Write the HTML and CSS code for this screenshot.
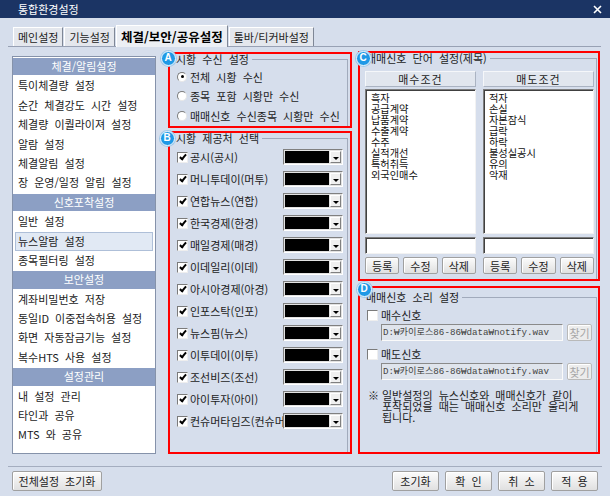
FILE: index.html
```html
<!DOCTYPE html>
<html lang="ko">
<head>
  <meta charset="UTF-8">
  <meta name="viewport" content="width=device-width, initial-scale=1.0">
  <title>통합환경설정</title>
  <link rel="stylesheet" href="styles.css">
</head>
<body>
  <div class="window">
    <div class="titlebar">
      <span class="title">통합환경설정</span>
      <svg class="close" width="9" height="9" viewBox="0 0 9 9"><path d="M1 1L8 8M8 1L1 8" stroke="#fff" stroke-width="1.6"/></svg>
    </div>

    <div class="tabs">
      <span class="tab">메인설정</span>
      <span class="tab">기능설정</span>
      <span class="tab active">체결/보안/공유설정</span>
      <span class="tab">툴바/티커바설정</span>
    </div>

    <div class="main">
      <div class="menu">
        <div class="menu-head">체결/알림설정</div>
        <div class="menu-item">특이체결량 설정</div>
        <div class="menu-item">순간 체결강도 시간 설정</div>
        <div class="menu-item">체결량 이퀄라이져 설정</div>
        <div class="menu-item">알람 설정</div>
        <div class="menu-item">체결알림 설정</div>
        <div class="menu-item">장 운영/일정 알림 설정</div>
        <div class="menu-head">신호포착설정</div>
        <div class="menu-item">일반 설정</div>
        <div class="menu-item sel">뉴스알람 설정</div>
        <div class="menu-item">종목필터링 설정</div>
        <div class="menu-head">보안설정</div>
        <div class="menu-item">계좌비밀번호 저장</div>
        <div class="menu-item">동일ID 이중접속허용 설정</div>
        <div class="menu-item">화면 자동잠금기능 설정</div>
        <div class="menu-item">복수HTS 사용 설정</div>
        <div class="menu-head">설정관리</div>
        <div class="menu-item">내 설정 관리</div>
        <div class="menu-item">타인과 공유</div>
        <div class="menu-item">MTS 와 공유</div>
      </div>

      <div class="col col-mid">
        <div class="mark mark-a">
          <span class="badge badge-a">A</span>
          <fieldset class="group">
            <legend>시황 수신 설정</legend>
            <div class="opts">
              <div class="opt"><span class="radio on"></span>전체 시황 수신</div>
              <div class="opt"><span class="radio"></span>종목 포함 시황만 수신</div>
              <div class="opt"><span class="radio"></span>매매신호 수신종목 시황만 수신</div>
            </div>
          </fieldset>
        </div>

        <div class="mark mark-b">
          <span class="badge badge-b">B</span>
          <fieldset class="group">
            <legend>시황 제공처 선택</legend>
            <div class="sources">
              <div class="src"><span class="chk on"></span><span class="src-name">공시(공시)</span><span class="combo"><span class="combo-fill"></span><span class="combo-btn"></span></span></div>
              <div class="src"><span class="chk on"></span><span class="src-name">머니투데이(머투)</span><span class="combo"><span class="combo-fill"></span><span class="combo-btn"></span></span></div>
              <div class="src"><span class="chk on"></span><span class="src-name">연합뉴스(연합)</span><span class="combo"><span class="combo-fill"></span><span class="combo-btn"></span></span></div>
              <div class="src"><span class="chk on"></span><span class="src-name">한국경제(한경)</span><span class="combo"><span class="combo-fill"></span><span class="combo-btn"></span></span></div>
              <div class="src"><span class="chk on"></span><span class="src-name">매일경제(매경)</span><span class="combo"><span class="combo-fill"></span><span class="combo-btn"></span></span></div>
              <div class="src"><span class="chk on"></span><span class="src-name">이데일리(이데)</span><span class="combo"><span class="combo-fill"></span><span class="combo-btn"></span></span></div>
              <div class="src"><span class="chk on"></span><span class="src-name">아시아경제(아경)</span><span class="combo"><span class="combo-fill"></span><span class="combo-btn"></span></span></div>
              <div class="src"><span class="chk on"></span><span class="src-name">인포스탁(인포)</span><span class="combo"><span class="combo-fill"></span><span class="combo-btn"></span></span></div>
              <div class="src"><span class="chk on"></span><span class="src-name">뉴스핌(뉴스)</span><span class="combo"><span class="combo-fill"></span><span class="combo-btn"></span></span></div>
              <div class="src"><span class="chk on"></span><span class="src-name">이투데이(이투)</span><span class="combo"><span class="combo-fill"></span><span class="combo-btn"></span></span></div>
              <div class="src"><span class="chk on"></span><span class="src-name">조선비즈(조선)</span><span class="combo"><span class="combo-fill"></span><span class="combo-btn"></span></span></div>
              <div class="src"><span class="chk on"></span><span class="src-name">아이투자(아이)</span><span class="combo"><span class="combo-fill"></span><span class="combo-btn"></span></span></div>
              <div class="src"><span class="chk on"></span><span class="src-name">컨슈머타임즈(컨슈머)</span><span class="combo"><span class="combo-fill"></span><span class="combo-btn"></span></span></div>
            </div>
          </fieldset>
        </div>
      </div>

      <div class="col col-right">
        <div class="mark mark-c">
          <span class="badge badge-c">C</span>
          <fieldset class="group group-c">
            <legend>매매신호 단어 설정(제목)</legend>
            <div class="cond">
              <div class="cond-col">
                <div class="cond-head">매수조건</div>
                <div class="cond-list">흑자<br>공급계약<br>납품계약<br>수출계약<br>수주<br>실적개선<br>특허취득<br>외국인매수</div>
                <div class="cond-input"></div>
                <div class="cond-btns">
                  <button class="btn">등록</button>
                  <button class="btn">수정</button>
                  <button class="btn">삭제</button>
                </div>
              </div>
              <div class="cond-col">
                <div class="cond-head">매도조건</div>
                <div class="cond-list">적자<br>손실<br>자본잠식<br>급락<br>하락<br>불성실공시<br>유의<br>악재</div>
                <div class="cond-input"></div>
                <div class="cond-btns">
                  <button class="btn">등록</button>
                  <button class="btn">수정</button>
                  <button class="btn">삭제</button>
                </div>
              </div>
            </div>
          </fieldset>
        </div>

        <div class="mark mark-d">
          <span class="badge badge-d">D</span>
          <fieldset class="group group-d">
            <legend>매매신호 소리 설정</legend>
            <div class="snd">
              <div class="snd-check"><span class="chk"></span>매수신호</div>
              <div class="snd-path">
                <span class="path-box">D:₩카이로스86-86₩data₩notify.wav</span>
                <button class="btn find-btn">찾기</button>
              </div>
            </div>
            <div class="snd snd-2">
              <div class="snd-check"><span class="chk"></span>매도신호</div>
              <div class="snd-path">
                <span class="path-box">D:₩카이로스86-86₩data₩notify.wav</span>
                <button class="btn find-btn">찾기</button>
              </div>
            </div>
            <div class="note">
              <span class="note-mark">※</span>
              <span>일반설정의 뉴스신호와 매매신호가 같이<br>포착되었을 때는 매매신호 소리만 울리게<br>됩니다.</span>
            </div>
          </fieldset>
        </div>
      </div>
    </div>

    <div class="footer">
      <button class="btn btn-reset">전체설정 초기화</button>
      <div class="spacer"></div>
      <button class="btn btn-foot">초기화</button>
      <button class="btn btn-foot">확 인</button>
      <button class="btn btn-foot">취 소</button>
      <button class="btn btn-foot">적 용</button>
    </div>
  </div>
</body>
</html>
```

FILE: styles.css
```css
* {
  box-sizing: border-box;
}

body {
  margin: 0;
  font-family: "Noto Sans CJK KR", "Liberation Sans", sans-serif;
  font-size: 11px;
  color: #1c1c1c;
}

.window {
  width: 610px;
  height: 496px;
  background-color: #d6deec;
  display: flex;
  flex-direction: column;
  word-spacing: 3px;
  overflow: hidden;
}

/* title bar */
.titlebar {
  height: 18px;
  flex: none;
  background-color: #1b3464;
  color: #fff;
  display: flex;
  align-items: center;
  justify-content: space-between;
  padding: 0 8px 0 18px;
}

/* tabs */
.tabs {
  height: 29px;
  flex: none;
  margin: 0 9px 0 8px;
  padding-left: 5px;
  display: flex;
  align-items: flex-end;
  gap: 1px;
  border-bottom: 1px solid #98a1b4;
}

.tab {
  height: 19px;
  padding: 0 4px;
  line-height: 18px;
  background-color: #e4e7ed;
  border: 1px solid;
  border-color: #fff #7f8796 transparent #fff;
  border-bottom: none;
  word-spacing: 0;
}

.tab.active {
  height: 22px;
  margin-bottom: -1px;
  background-color: #eceff4;
  font-weight: bold;
  font-size: 12.5px;
  line-height: 21px;
  color: #000;
}

/* main area */
.main {
  height: 407px;
  flex: none;
  display: flex;
  padding: 4px 10px 0 12px;
}

.menu {
  width: 144px;
  margin: 5px 12px 0 0;
  background-color: #fff;
  border: 1px solid #8592aa;
}

.menu-head {
  height: 17.4px;
  margin: 1px 0;
  line-height: 17px;
  text-align: center;
  background-color: #8c9fc4;
  color: #fff;
}

.menu-item {
  height: 19.4px;
  line-height: 19px;
  margin: 0 2px;
  padding-left: 3px;
  white-space: nowrap;
}

.menu-item.sel {
  background-color: #e1e9f4;
  border: 1px solid #aebfd8;
  line-height: 17px;
  padding-left: 2px;
}

.col {
  display: flex;
  flex-direction: column;
}

.col-mid {
  width: 184px;
  margin-right: 6px;
  padding-top: 1px;
  gap: 3px;
}

.col-right {
  width: 242px;
  gap: 5px;
}

/* red annotation boxes */
.mark {
  position: relative;
  border: 2px solid #ff0000;
  display: flex;
  flex-direction: column;
}

.mark-a {
  height: 76px;
}

.mark-c {
  height: 230px;
}

.mark-b,
.mark-d {
  flex: 1;
}

.badge {
  position: absolute;
  z-index: 2;
  width: 15px;
  height: 15px;
  border-radius: 50%;
  background-color: #1f99e6;
  border: 1.5px solid #eef7fd;
  box-shadow: 0 0 0 1px #9fc9ea;
  color: #fff;
  font: bold 10px/12px "Liberation Sans", sans-serif;
  text-align: center;
}

.badge-a { left: -9.5px; top: -3.5px; }
.badge-b { left: -10.5px; top: -2.5px; }
.badge-c { left: -4.5px; top: -2.5px; }
.badge-d { left: -3.5px; top: -6.5px; }

/* group boxes */
.group {
  flex: 1;
  min-width: 0;
  margin: 0 2px 0 6px;
  padding: 0;
  border: none;
  border-top: 1px solid #a1aabb;
  border-right: 1px solid #a1aabb;
}

.group legend {
  padding: 0 3px 0 0;
  line-height: 11px;
}

.group-c {
  margin: 0 1px 0 5px;
}

.group-c legend {
  padding-left: 1px;
}

.group-d {
  margin: 4px 1px 0 6px;
}

/* A: radios */
.opts {
  padding-top: 2px;
}

.opt {
  height: 19.5px;
  display: flex;
  align-items: center;
  padding-left: 1px;
}

.radio {
  position: relative;
  flex: none;
  width: 10px;
  height: 10px;
  margin-right: 3px;
  border-radius: 50%;
  border: 1px solid;
  border-color: #7b7b7b #e6e6e6 #e6e6e6 #7b7b7b;
  background-color: #fff;
}

.radio.on::after {
  content: "";
  position: absolute;
  left: 2.5px;
  top: 2.5px;
  width: 3px;
  height: 3px;
  border-radius: 50%;
  background-color: #000;
}

/* checkboxes */
.chk {
  position: relative;
  flex: none;
  width: 11px;
  height: 11px;
  margin-right: 2px;
  border: 1px solid;
  border-color: #7b7b7b #eeeeee #eeeeee #7b7b7b;
  background-color: #fff;
}

.chk.on::after {
  content: "";
  position: absolute;
  left: 3px;
  top: 0.5px;
  width: 2px;
  height: 5px;
  border: solid #000;
  border-width: 0 2px 2px 0;
  transform: rotate(40deg);
}

/* B: sources */
.sources {
  padding-top: 2px;
}

.src {
  height: 22px;
  display: flex;
  align-items: center;
  padding: 0 4px 0 1px;
}

.src-name {
  flex: 1;
  min-width: 0;
  overflow: hidden;
  white-space: nowrap;
  word-spacing: 0;
}

.combo {
  flex: none;
  width: 60px;
  height: 16px;
  display: flex;
  gap: 1px;
  padding: 1px;
  border: 1px solid;
  border-color: #808080 #fff #fff #808080;
  background-color: #e2e2e2;
}

.combo-fill {
  flex: 1;
  background-color: #000;
}

.combo-btn {
  position: relative;
  width: 11px;
  background-color: #f0f0f0;
  border: 1px solid;
  border-color: #fff #808080 #808080 #fff;
}

.combo-btn::after {
  content: "";
  position: absolute;
  left: 1.5px;
  top: 5px;
  border-left: 3px solid transparent;
  border-right: 3px solid transparent;
  border-top: 3px solid #000;
}

/* C: word conditions */
.cond {
  display: grid;
  grid-template-columns: 111px 111px;
  column-gap: 7px;
  margin-top: 7px;
  padding-right: 3px;
}

.cond-col {
  display: flex;
  flex-direction: column;
}

.cond-head {
  height: 16px;
  line-height: 14px;
  text-align: center;
  letter-spacing: 1px;
  background-color: #e1e6ee;
  border: 1px solid;
  border-color: #f5f7fa #aab3c2 #aab3c2 #f5f7fa;
}

.cond-list {
  height: 145px;
  margin-top: 2px;
  padding: 2px 5px;
  font-size: 10.2px;
  line-height: 11px;
  background-color: #fff;
  border: 1px solid;
  border-color: #7d7d7d #f2f2f2 #f2f2f2 #7d7d7d;
  box-shadow: inset 1px 1px 0 #404040;
  color: #111;
}

.cond-input {
  height: 17px;
  margin-top: 3px;
  background-color: #fff;
  border: 1px solid;
  border-color: #7d7d7d #f2f2f2 #f2f2f2 #7d7d7d;
  box-shadow: inset 1px 1px 0 #404040;
}

.cond-btns {
  display: grid;
  grid-template-columns: repeat(3, 1fr);
  gap: 4px;
  margin-top: 3px;
}

.cond-btns .btn {
  height: 17px;
}

/* buttons */
.btn {
  height: 20px;
  padding: 0;
  font: inherit;
  color: #222;
  word-spacing: 3px;
  background: linear-gradient(#fbfbfb, #e0e0e0);
  border: 1px solid #a0a0a0;
  border-radius: 2px;
  box-shadow: inset 1px 1px 0 #fff;
}

/* D: sounds */
.snd {
  margin-top: 3px;
  padding-left: 1px;
}

.snd-2 {
  margin-top: 4px;
}

.snd-check {
  height: 18px;
  display: flex;
  align-items: center;
}

.snd-check .chk {
  margin-right: 3px;
}

.snd-path {
  height: 17px;
  display: flex;
  gap: 4px;
  margin-left: 14px;
}

.path-box {
  width: 182px;
  padding-left: 1px;
  font-family: "Liberation Mono", "Noto Sans CJK KR", monospace;
  font-size: 9.2px;
  line-height: 15px;
  color: #444;
  background-color: #dfe4ec;
  border: 1px solid;
  border-color: #8a8a8a #fafafa #fafafa #8a8a8a;
  white-space: nowrap;
  overflow: hidden;
}

.find-btn {
  width: 25px;
  height: 17px;
  color: #a6a6a6;
  background: #ececec;
  border-color: #b9b9b9;
}

.note {
  display: flex;
  margin-top: 10px;
  padding-left: 2px;
  line-height: 11px;
}

.note-mark {
  width: 14px;
  flex: none;
}

/* footer */
.footer {
  flex: none;
  display: flex;
  gap: 6px;
  margin: 12px 8px 0;
  padding: 4px 4px 0;
  border-top: 1px solid #a4adbf;
}

.spacer {
  flex: 1;
}

.btn-reset {
  width: 90px;
}

.btn-foot {
  width: 47px;
}
```
